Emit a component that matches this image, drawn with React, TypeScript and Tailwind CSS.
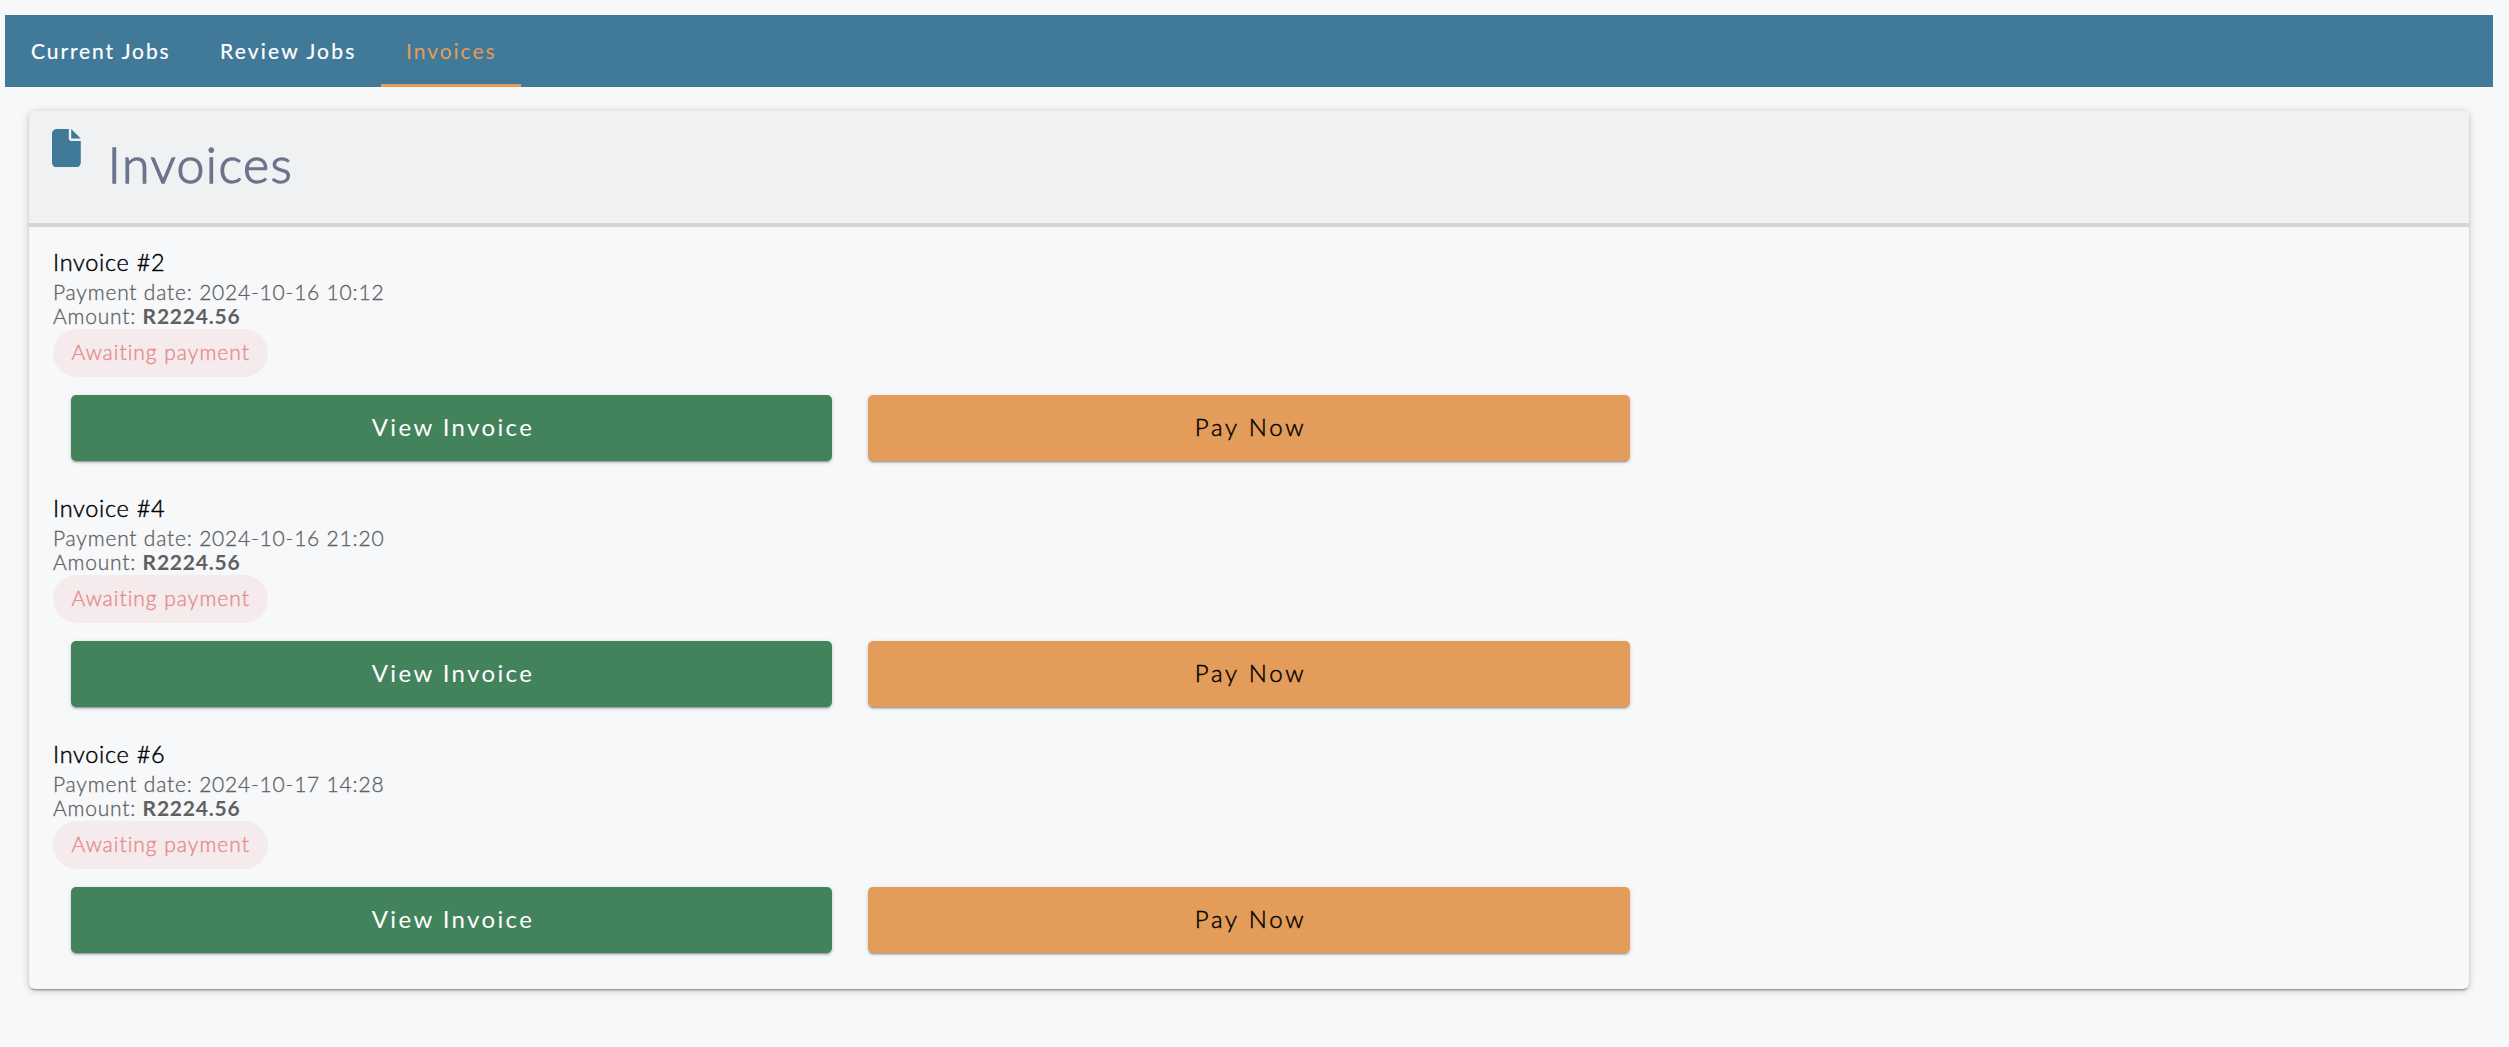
type Invoice = { id: number; date: string; amount: string };

const invoices: Invoice[] = [
  { id: 2, date: "2024-10-16 10:12", amount: "R2224.56" },
  { id: 4, date: "2024-10-16 21:20", amount: "R2224.56" },
  { id: 6, date: "2024-10-17 14:28", amount: "R2224.56" },
];

const elevation =
  "shadow-[0_3px_1px_-2px_rgba(0,0,0,0.2),0_2px_2px_0_rgba(0,0,0,0.14),0_1px_5px_0_rgba(0,0,0,0.12)]";

const cardElevation =
  "shadow-[0_3px_1px_-2px_rgba(0,0,0,0.2),0_2px_2px_0_rgba(0,0,0,0.14),0_1px_8px_0_rgba(0,0,0,0.2)]";

function FileIcon() {
  return (
    <svg viewBox="0 0 384 512" className="mt-[18px] ml-[23px] h-[38.4px] w-[28.8px] shrink-0 fill-[#417a99]">
      <path d="M0 64C0 28.7 28.7 0 64 0H224V128c0 17.7 14.3 32 32 32H384V448c0 35.3-28.7 64-64 64H64c-35.3 0-64-28.7-64-64V64zm384 64H256V0L384 128z" />
    </svg>
  );
}

function NavBar() {
  return (
    <nav className="mr-4 ml-[5px] flex h-[72px] bg-[#417a99] text-[21px] leading-[71px] text-white [-webkit-text-stroke:0.2px]">
      <a className="w-[190px] pl-[26px] tracking-[1.91px]">Current Jobs</a>
      <a className="w-[186px] pl-[25px] tracking-[2.2px]">Review Jobs</a>
      <a className="w-[140px] border-b-[3px] border-[#e49c5a] pl-[25px] tracking-[1.98px] text-[#e49c5a] [-webkit-text-stroke:0px]">Invoices</a>
    </nav>
  );
}

function InvoiceItem({ id, date, amount }: Invoice) {
  return (
    <section className="mb-[33px]">
      <h2 className="text-[23.5px] leading-7 font-light tracking-[0.71px] text-black [-webkit-text-stroke:0.45px]">
        Invoice #{id}
      </h2>
      <div className="mt-1 text-[21px] leading-6 font-light tracking-[0.8px] text-[#606060] [-webkit-text-stroke:0.3px]">
        <p>Payment date: {date}</p>
        <p>
          Amount: <strong className="font-bold tracking-[0.78px] text-[#606060] [-webkit-text-stroke:0px]">{amount}</strong>
        </p>
      </div>
      <span className="mt-px flex h-12 w-[215px] rounded-full bg-[#f5ebec] pl-[18.5px] text-[21px] leading-[46px] font-light tracking-[1px] text-[#e58c8e] [-webkit-text-stroke:0.4px]">
        Awaiting payment
      </span>
      <div className="mt-[18px] ml-[18px] flex gap-9 text-[24px]">
        <button className={`h-[66px] w-[761px] rounded-[5px] bg-[#42835c] pb-0.5 pl-[3px] tracking-[2.37px] text-white ${elevation}`}>
          View Invoice
        </button>
        <button className={`h-[66px] w-[762px] rounded-[5px] bg-[#e39c5a] pb-0.5 pl-[3px] font-light tracking-[2.77px] text-black [-webkit-text-stroke:0.45px] ${elevation}`}>
          Pay Now
        </button>
      </div>
    </section>
  );
}

export default function App() {
  return (
    <div className="min-h-screen bg-[#f7f8fa] pt-[15px] font-['Lato',sans-serif] whitespace-nowrap">
      <NavBar />
      <main className={`mt-6 mr-10 ml-[29px] h-[878px] rounded-[6px] ${cardElevation}`}>
        <header className="flex h-[116px] rounded-t-[6px] border-b-4 border-[#d4d5d7] bg-[#f0f1f3]">
          <FileIcon />
          <h1 className="mt-[23px] ml-[27px] text-[50px] leading-[60px] font-light tracking-[1.5px] text-[#6b748c] [-webkit-text-stroke:1.3px]">
            Invoices
          </h1>
        </header>
        <div className="pt-[21px] pl-6">
          {invoices.map((invoice) => (
            <InvoiceItem key={invoice.id} {...invoice} />
          ))}
        </div>
      </main>
    </div>
  );
}
